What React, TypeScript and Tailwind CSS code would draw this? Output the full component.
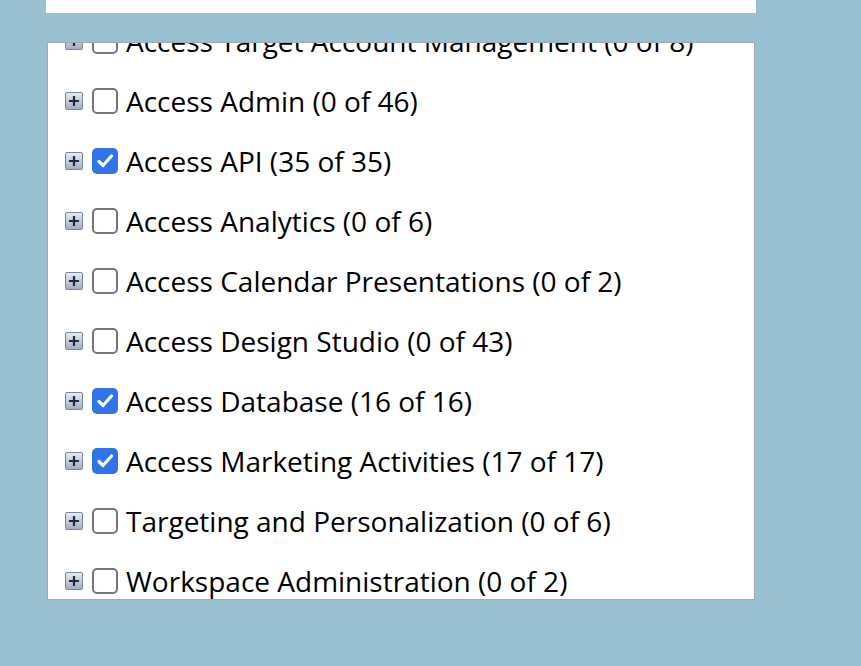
import React from 'react'

type Permission = {
    name: string
    selected: number
    total: number
}

const permissions: Permission[] = [
    {name: 'Access Target Account Management', selected: 0, total: 8},
    {name: 'Access Admin', selected: 0, total: 46},
    {name: 'Access API', selected: 35, total: 35},
    {name: 'Access Analytics', selected: 0, total: 6},
    {name: 'Access Calendar Presentations', selected: 0, total: 2},
    {name: 'Access Design Studio', selected: 0, total: 43},
    {name: 'Access Database', selected: 16, total: 16},
    {name: 'Access Marketing Activities', selected: 17, total: 17},
    {name: 'Targeting and Personalization', selected: 0, total: 6},
    {name: 'Workspace Administration', selected: 0, total: 2},
]

// little bevelled "+" expander box, like an old tree view
const Expander = () => (
    <span
        className="flex h-[18px] w-[18px] items-center justify-center rounded-[2px] border border-[#7a869c] bg-gradient-to-b from-[#e6eaf1] to-[#a3aec0]">
        <svg width="12" height="12" viewBox="0 0 12 12">
            <path d="M6 1v10M1 6h10" stroke="#1f2b40" strokeWidth="2.2"/>
        </svg>
    </span>
)

const Checkbox = ({checked}: { checked: boolean }) => {
    if (checked)
        return (
            <span className="flex h-[26px] w-[26px] items-center justify-center rounded-[5px] bg-[#2f74e9]">
                <svg width="20" height="20" viewBox="0 0 20 20">
                    <path d="M4 10.5l4 4L16.5 5" fill="none" stroke="white" strokeWidth="3.2"
                          strokeLinecap="round" strokeLinejoin="round"/>
                </svg>
            </span>
        )
    return <span className="block h-[26px] w-[26px] rounded-[5px] border-2 border-[#767676] bg-white"/>
}

export default function App() {
    return (
        <div className="h-[666px] w-[861px] overflow-hidden bg-[#97c1d1]"
             style={{fontFamily: '"Open Sans", "Noto Sans", sans-serif'}}>
            <div className="ml-[46px] h-[13px] w-[710px] bg-white"/>
            <div
                className="ml-[47px] mt-[29px] h-[558px] w-[708px] overflow-hidden border border-[#a2a9b4] bg-white">
                <ul className="-mt-[32px]">
                    {permissions.map((p, index) => (
                        <li key={`perm-${index}`} className="flex h-[60px] items-center pl-[17px]">
                            <Expander/>
                            <span className="ml-[9px]"><Checkbox checked={p.selected > 0}/></span>
                            <span className="ml-[8px] text-[28px] leading-none text-black">
                                {p.name} ({p.selected} of {p.total})
                            </span>
                        </li>
                    ))}
                </ul>
            </div>
        </div>
    )
}
